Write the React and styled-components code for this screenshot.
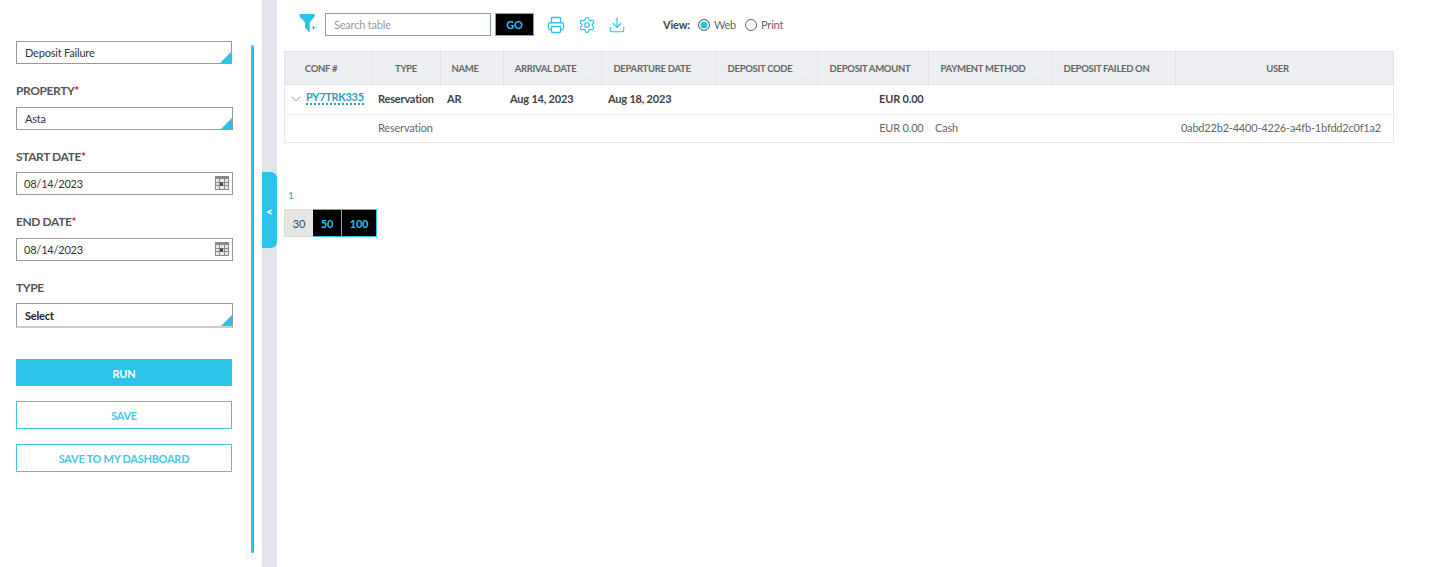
import React from 'react';
import styled, { createGlobalStyle } from 'styled-components';
import { Printer, Settings, Download, ChevronDown, ChevronUp } from 'lucide-react';

const CYAN = '#2bc4e8';

const GlobalStyle = createGlobalStyle`
  html, body { margin: 0; padding: 0; background: #fff; }
  body { font-family: Lato, "Open Sans", sans-serif; color: #4a4a4a; letter-spacing: -0.2px; }
  * { box-sizing: border-box; }
`;

const columns = [
  { title: 'CONF #', width: 87, gap: 8 },
  { title: 'TYPE', width: 69, unsorted: true },
  { title: 'NAME', width: 63, gap: 8 },
  { title: 'ARRIVAL DATE', width: 98, gap: 8 },
  { title: 'DEPARTURE DATE', width: 115, gap: 8 },
  { title: 'DEPOSIT CODE', width: 101, gap: 8 },
  { title: 'DEPOSIT AMOUNT', width: 111, gap: 0 },
  { title: 'PAYMENT METHOD', width: 123, gap: 8 },
  { title: 'DEPOSIT FAILED ON', width: 124, gap: 8 },
  { title: 'USER', width: 218, gap: 8 },
];

const CalendarIcon = () => (
  <svg width="14" height="14" viewBox="0 0 14 14">
    <rect x="0" y="0" width="14" height="14" fill="#8a8a8a" />
    <rect x="1" y="3" width="12" height="10" fill="#e8e8e8" />
    <path d="M4.5 3v10M9.5 3v10M1 6.5h12M1 9.5h12" stroke="#8a8a8a" strokeWidth="1" fill="none" />
    <rect x="5" y="6.5" width="3" height="3" fill="#444" />
  </svg>
);

const FilterIcon = () => (
  <svg width="18" height="19" viewBox="0 0 18 19">
    <path d="M0.3 1.2 C0.3 0.4 0.9 0 1.6 0 H14.6 C15.3 0 15.9 0.4 15.9 1.2 C15.9 2 15.4 2.8 14.8 3.4 L10.8 8.4 V17.2 C10.8 18.2 10 18.2 9.5 17.6 L6.8 14.6 C6.2 14 6 13.6 6 13 V8.4 L1.4 3.4 C0.8 2.8 0.3 2 0.3 1.2 Z" fill={CYAN} />
    <path d="M14.5 12v3.5M12.7 13.7h3.6" stroke={CYAN} strokeWidth="1.1" fill="none" />
  </svg>
);

const App = () => (
  <Page>
    <GlobalStyle />
    <Sidebar>
      <Form>
        <Select>Deposit Failure</Select>
        <Label>PROPERTY<Required>*</Required></Label>
        <Select $wide>Asta</Select>
        <Label $tight>START DATE<Required>*</Required></Label>
        <DateField>08/14/2023<CalendarIcon /></DateField>
        <Label>END DATE<Required>*</Required></Label>
        <DateField>08/14/2023<CalendarIcon /></DateField>
        <Label $tight>TYPE</Label>
        <Select $wide $strong>Select</Select>
        <RunButton>RUN</RunButton>
        <OutlineButton>SAVE</OutlineButton>
        <OutlineButton>SAVE TO MY DASHBOARD</OutlineButton>
      </Form>
      <ScrollThumb />
    </Sidebar>
    <Rail>
      <CollapseTab>&lt;</CollapseTab>
    </Rail>
    <Main>
      <Toolbar>
        <FilterButton><FilterIcon /></FilterButton>
        <SearchBox>Search table</SearchBox>
        <GoButton>GO</GoButton>
        <IconRow>
          <Printer size={18} strokeWidth={1.7} />
          <Settings size={18} strokeWidth={1.6} />
          <Download size={18} strokeWidth={1.5} />
        </IconRow>
        <ViewLabel>View:</ViewLabel>
        <RadioOption><Radio $checked />Web</RadioOption>
        <RadioOption><Radio />Print</RadioOption>
      </Toolbar>
      <Table>
        <colgroup>
          {columns.map((c) => <col key={c.title} style={{ width: c.width }} />)}
        </colgroup>
        <thead>
          <tr>
            {columns.map((c) => (
              <Th key={c.title}>
                {c.title}
                {!c.unsorted && (
                  <SortIcon $gap={c.gap}>
                    <ChevronUp size={6} strokeWidth={3} />
                    <ChevronDown size={6} strokeWidth={3} />
                  </SortIcon>
                )}
              </Th>
            ))}
          </tr>
        </thead>
        <tbody>
          <ParentRow>
            <Td>
              <Expander><ChevronDown size={16} strokeWidth={1} /></Expander>
              <ConfLink>PY7TRK335</ConfLink>
            </Td>
            <Td>Reservation</Td>
            <Td>AR</Td>
            <Td>Aug 14, 2023</Td>
            <Td>Aug 18, 2023</Td>
            <Td />
            <Td $right>EUR 0.00</Td>
            <Td />
            <Td />
            <Td />
          </ParentRow>
          <ChildRow>
            <Td />
            <Td>Reservation</Td>
            <Td />
            <Td />
            <Td />
            <Td />
            <Td $right>EUR 0.00</Td>
            <Td>Cash</Td>
            <Td />
            <Td $right>0abd22b2-4400-4226-a4fb-1bfdd2c0f1a2</Td>
          </ChildRow>
        </tbody>
      </Table>
      <PageNumber>1</PageNumber>
      <PageSizes>
        <PageSize $active $width={29}>30</PageSize>
        <PageSize $width={29}>50</PageSize>
        <PageSize $width={35}>100</PageSize>
      </PageSizes>
    </Main>
  </Page>
);

const Page = styled.div`
  display: flex;
  width: 1448px;
  height: 567px;
  overflow: hidden;
`;

const Sidebar = styled.aside`
  display: flex;
  flex: 0 0 262px;
  padding-left: 16px;
`;

const Form = styled.div`
  display: flex;
  flex-direction: column;
  width: 217px;
  padding-top: 41px;
`;

const ScrollThumb = styled.div`
  width: 3px;
  height: 508px;
  margin: 45px 0 0 18px;
  border-radius: 2px;
  background: ${CYAN};
`;

const Label = styled.div`
  margin: 18px 0 ${(p) => (p.$tight ? '7px' : '8px')};
  height: 17px;
  line-height: 17px;
  font-size: 12px;
  font-weight: 700;
  letter-spacing: -0.4px;
  color: #555;
`;

const Required = styled.span`
  color: #e0182d;
`;

const Select = styled.div`
  position: relative;
  display: flex;
  align-items: center;
  width: ${(p) => (p.$wide ? '217px' : '216px')};
  height: ${(p) => (p.$strong ? '25px' : '23px')};
  padding-left: 8px;
  border: 1px solid #999;
  ${(p) => p.$strong && 'border-bottom: 2px solid #ccc;'}
  font-size: 11px;
  font-weight: ${(p) => (p.$strong ? 700 : 400)};
  color: ${(p) => (p.$strong ? '#222' : '#333')};
  &::after {
    content: '';
    position: absolute;
    right: 0;
    bottom: 0;
    border-style: solid;
    border-width: 0 0 11px 11px;
    border-color: transparent transparent ${CYAN} transparent;
  }
`;

const DateField = styled.div`
  display: flex;
  align-items: center;
  justify-content: space-between;
  width: 217px;
  height: 23px;
  padding: 0 3px 1px 7px;
  border: 1px solid #999;
  font-size: 11px;
  color: #333;
`;

const RunButton = styled.div`
  display: flex;
  align-items: center;
  justify-content: center;
  width: 216px;
  height: 27px;
  margin-top: 31px;
  padding-top: 1px;
  background: ${CYAN};
  color: #fff;
  font-size: 11px;
  font-weight: 700;
`;

const OutlineButton = styled.div`
  display: flex;
  align-items: center;
  justify-content: center;
  width: 216px;
  height: 28px;
  margin-top: 15px;
  border: 1px solid #3fc5e6;
  color: #4cc5e6;
  font-size: 11px;
  font-weight: 700;
  letter-spacing: -0.28px;
`;

const Rail = styled.div`
  flex: 0 0 15px;
  padding-top: 172px;
  background: #e3e4e9;
`;

const CollapseTab = styled.div`
  display: flex;
  align-items: center;
  justify-content: center;
  height: 76px;
  padding-top: 2px;
  border-radius: 0 6px 6px 0;
  background: ${CYAN};
  color: #fff;
  font-size: 12px;
  font-weight: 900;
`;

const Main = styled.main`
  flex: 1;
  padding: 12px 0 0 7px;
`;

const Toolbar = styled.div`
  display: flex;
  align-items: center;
  height: 25px;
  margin-bottom: 14px;
`;

const FilterButton = styled.div`
  display: flex;
  margin: -3px 8px 0 15px;
`;

const SearchBox = styled.div`
  display: flex;
  align-items: center;
  width: 166px;
  height: 23px;
  padding-left: 8px;
  border: 1px solid #999;
  font-size: 11px;
  color: #999;
`;

const GoButton = styled.div`
  display: flex;
  align-items: center;
  justify-content: center;
  width: 39px;
  height: 23px;
  margin-left: 4px;
  border: 1px solid ${CYAN};
  background: #000;
  color: ${CYAN};
  font-size: 11px;
  font-weight: 700;
`;

const IconRow = styled.div`
  display: flex;
  gap: 12.5px;
  margin-left: 13px;
  color: ${CYAN};
`;

const ViewLabel = styled.span`
  margin-left: 37px;
  font-size: 11px;
  font-weight: 700;
  color: #444;
`;

const RadioOption = styled.label`
  display: flex;
  align-items: center;
  gap: 4px;
  margin-left: 8px;
  font-size: 11px;
  color: #666;
  & + & { margin-left: 9px; }
`;

const Radio = styled.span`
  display: flex;
  width: 12px;
  height: 12px;
  border: 1.5px solid #666;
  border-radius: 50%;
  background: ${(p) => (p.$checked ? CYAN : '#fff')};
  box-shadow: ${(p) => (p.$checked ? 'inset 0 0 0 1.5px #fff' : 'none')};
`;

const Table = styled.table`
  width: 1109px;
  table-layout: fixed;
  border-collapse: collapse;
`;

const Th = styled.th`
  height: 33px;
  padding: 1px 0 0;
  border: 1px solid #e2e3e6;
  background: #eceef1;
  font-size: 9.5px;
  font-weight: 700;
  letter-spacing: -0.3px;
  color: #666;
  text-align: center;
  white-space: nowrap;
`;

const SortIcon = styled.span`
  display: inline-flex;
  flex-direction: column;
  vertical-align: middle;
  margin: -6px 0 -6px ${(p) => p.$gap}px;
  color: #f6f7f8;
`;

const ParentRow = styled.tr`
  height: 30px;
  font-size: 11px;
  font-weight: 700;
  color: #3f3f3f;
  border-bottom: 1px solid #eee;
`;

const ChildRow = styled.tr`
  height: 28px;
  font-size: 11px;
  color: #666;
  border-bottom: 1px solid #e4e4e4;
`;

const Td = styled.td`
  padding: 0 ${(p) => (p.$right ? '5px' : '7px')} 2px 6.5px;
  text-align: ${(p) => (p.$right ? 'right' : 'left')};
  white-space: nowrap;
  &:first-child { border-left: 1px solid #e8e8e8; padding: 0 0 2px 3px; }
  &:last-child { border-right: 1px solid #e8e8e8; padding: 0 12px 2px 0; }
`;

const Expander = styled.span`
  display: inline-flex;
  vertical-align: middle;
  margin-right: 2px;
  color: #777;
`;

const ConfLink = styled.a`
  border-bottom: 2px dotted #2a9fc4;
  color: #2a9fc4;
  font-size: 11px;
  font-weight: 700;
  letter-spacing: -0.3px;
`;

const PageNumber = styled.div`
  height: 14px;
  margin: 45px 0 7px 4px;
  line-height: 14px;
  font-size: 10px;
  color: #3a9fc0;
`;

const PageSizes = styled.div`
  display: flex;
`;

const PageSize = styled.div`
  display: flex;
  align-items: center;
  justify-content: center;
  width: ${(p) => p.$width}px;
  height: 28px;
  border: 1px solid ${(p) => (p.$active ? '#ddd' : CYAN)};
  border-width: ${(p) => (p.$active ? '1px 0 1px 1px' : '1px 1px 1px 0')};
  background: ${(p) => (p.$active ? '#e6e6e6' : '#000')};
  color: ${(p) => (p.$active ? '#444' : CYAN)};
  font-size: 11px;
  font-weight: ${(p) => (p.$active ? 400 : 700)};
`;

export default App;
